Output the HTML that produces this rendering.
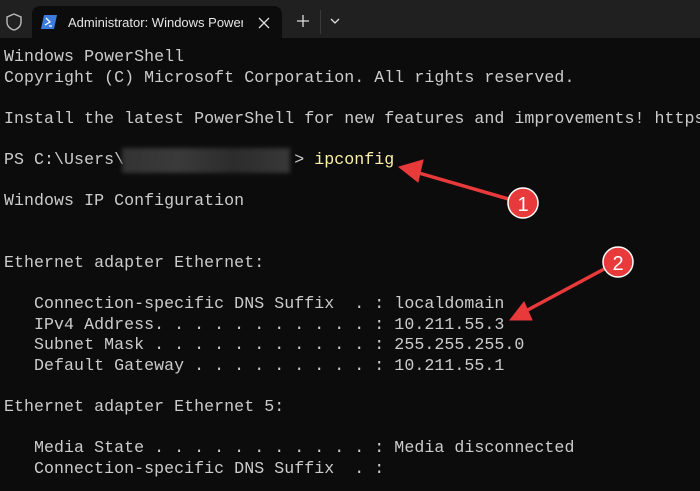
<!DOCTYPE html>
<html><head><style>
body{margin:0;width:700px;height:491px;background:#0c0c0c;overflow:hidden;position:relative;font-family:"Liberation Sans",sans-serif}
.bar{position:absolute;left:0;top:0;width:700px;height:38px;background:#202020}
.tab{position:absolute;left:32px;top:6px;width:250px;height:32px;background:#0c0c0c;border-radius:8px 8px 0 0}
.tab span{position:absolute;left:36px;top:9px;color:#e6e6e6;font-size:13px;white-space:nowrap;width:175px;overflow:hidden}
pre{position:absolute;left:4px;top:47px;width:696px;height:440px;overflow:hidden;margin:0;font-family:"Liberation Mono",monospace;font-size:16.6px;line-height:20.6px;color:#cccccc;letter-spacing:0.05px}
.y{color:#f9f1a5}
.blur{position:absolute;left:122px;top:148px;width:168px;height:25px;background:linear-gradient(90deg,#333,#3a3a3a,#2c2c2c,#383838);filter:blur(2px)}
</style></head><body>
<div class="bar"></div>
<svg style="position:absolute;left:5px;top:12px" width="18" height="20"><path d="M9 2 L16 5 V10 C16 14 13 17 9 18 C5 17 2 14 2 10 V5 Z" fill="none" stroke="#bbb" stroke-width="1.4"/></svg>
<div class="tab"><svg style="position:absolute;left:9px;top:9px" width="16" height="14"><path d="M3 0 H16 L13 14 H0 Z" fill="#3a7be0"/><path d="M5 3 L9 7 L4 10 M8 11 H11" stroke="#fff" stroke-width="1.3" fill="none"/></svg><span>Administrator: Windows PowerShell</span>
<svg style="position:absolute;left:226px;top:11px" width="12" height="12"><path d="M1 1 L11 11 M11 1 L1 11" stroke="#ddd" stroke-width="1.3"/></svg></div>
<svg style="position:absolute;left:296px;top:14px" width="14" height="14"><path d="M7 1 V13 M1 7 H13" stroke="#ddd" stroke-width="1.3"/></svg>
<div style="position:absolute;left:320px;top:10px;width:1px;height:24px;background:#3a3a3a"></div>
<svg style="position:absolute;left:330px;top:18px" width="10" height="7"><path d="M1 1 L5 5 L9 1" stroke="#ddd" stroke-width="1.3" fill="none"/></svg>
<pre>Windows PowerShell
Copyright (C) Microsoft Corporation. All rights reserved.

Install the latest PowerShell for new features and improvements! https://aka.ms/PSWindows

PS C:\Users\                 > <span class="y">ipconfig</span>

Windows IP Configuration


Ethernet adapter Ethernet:

   Connection-specific DNS Suffix  . : localdomain
   IPv4 Address. . . . . . . . . . . : 10.211.55.3
   Subnet Mask . . . . . . . . . . . : 255.255.255.0
   Default Gateway . . . . . . . . . : 10.211.55.1

Ethernet adapter Ethernet 5:

   Media State . . . . . . . . . . . : Media disconnected
   Connection-specific DNS Suffix  . :</pre>
<div class="blur"></div>
<svg style="position:absolute;left:0;top:0" width="700" height="491">
<g stroke="#e8393b" stroke-width="3.5" fill="#e8393b" stroke-linecap="round">
<line x1="512" y1="200" x2="412" y2="171"/>
<path d="M399 167 L423 160 L418 182 Z" stroke-width="1"/>
<line x1="606" y1="268" x2="522" y2="313"/>
<path d="M510 320 L524 302 L532 320 Z" stroke-width="1"/>
</g>
<circle cx="523" cy="203" r="15" fill="#e8393b" stroke="#fff" stroke-width="1.5"/>
<text x="523" y="211" text-anchor="middle" fill="#fff" font-family="Liberation Sans" font-size="20">1</text>
<circle cx="618" cy="262" r="15" fill="#e8393b" stroke="#fff" stroke-width="1.5"/>
<text x="618" y="270" text-anchor="middle" fill="#fff" font-family="Liberation Sans" font-size="20">2</text>
</svg>
</body></html>
